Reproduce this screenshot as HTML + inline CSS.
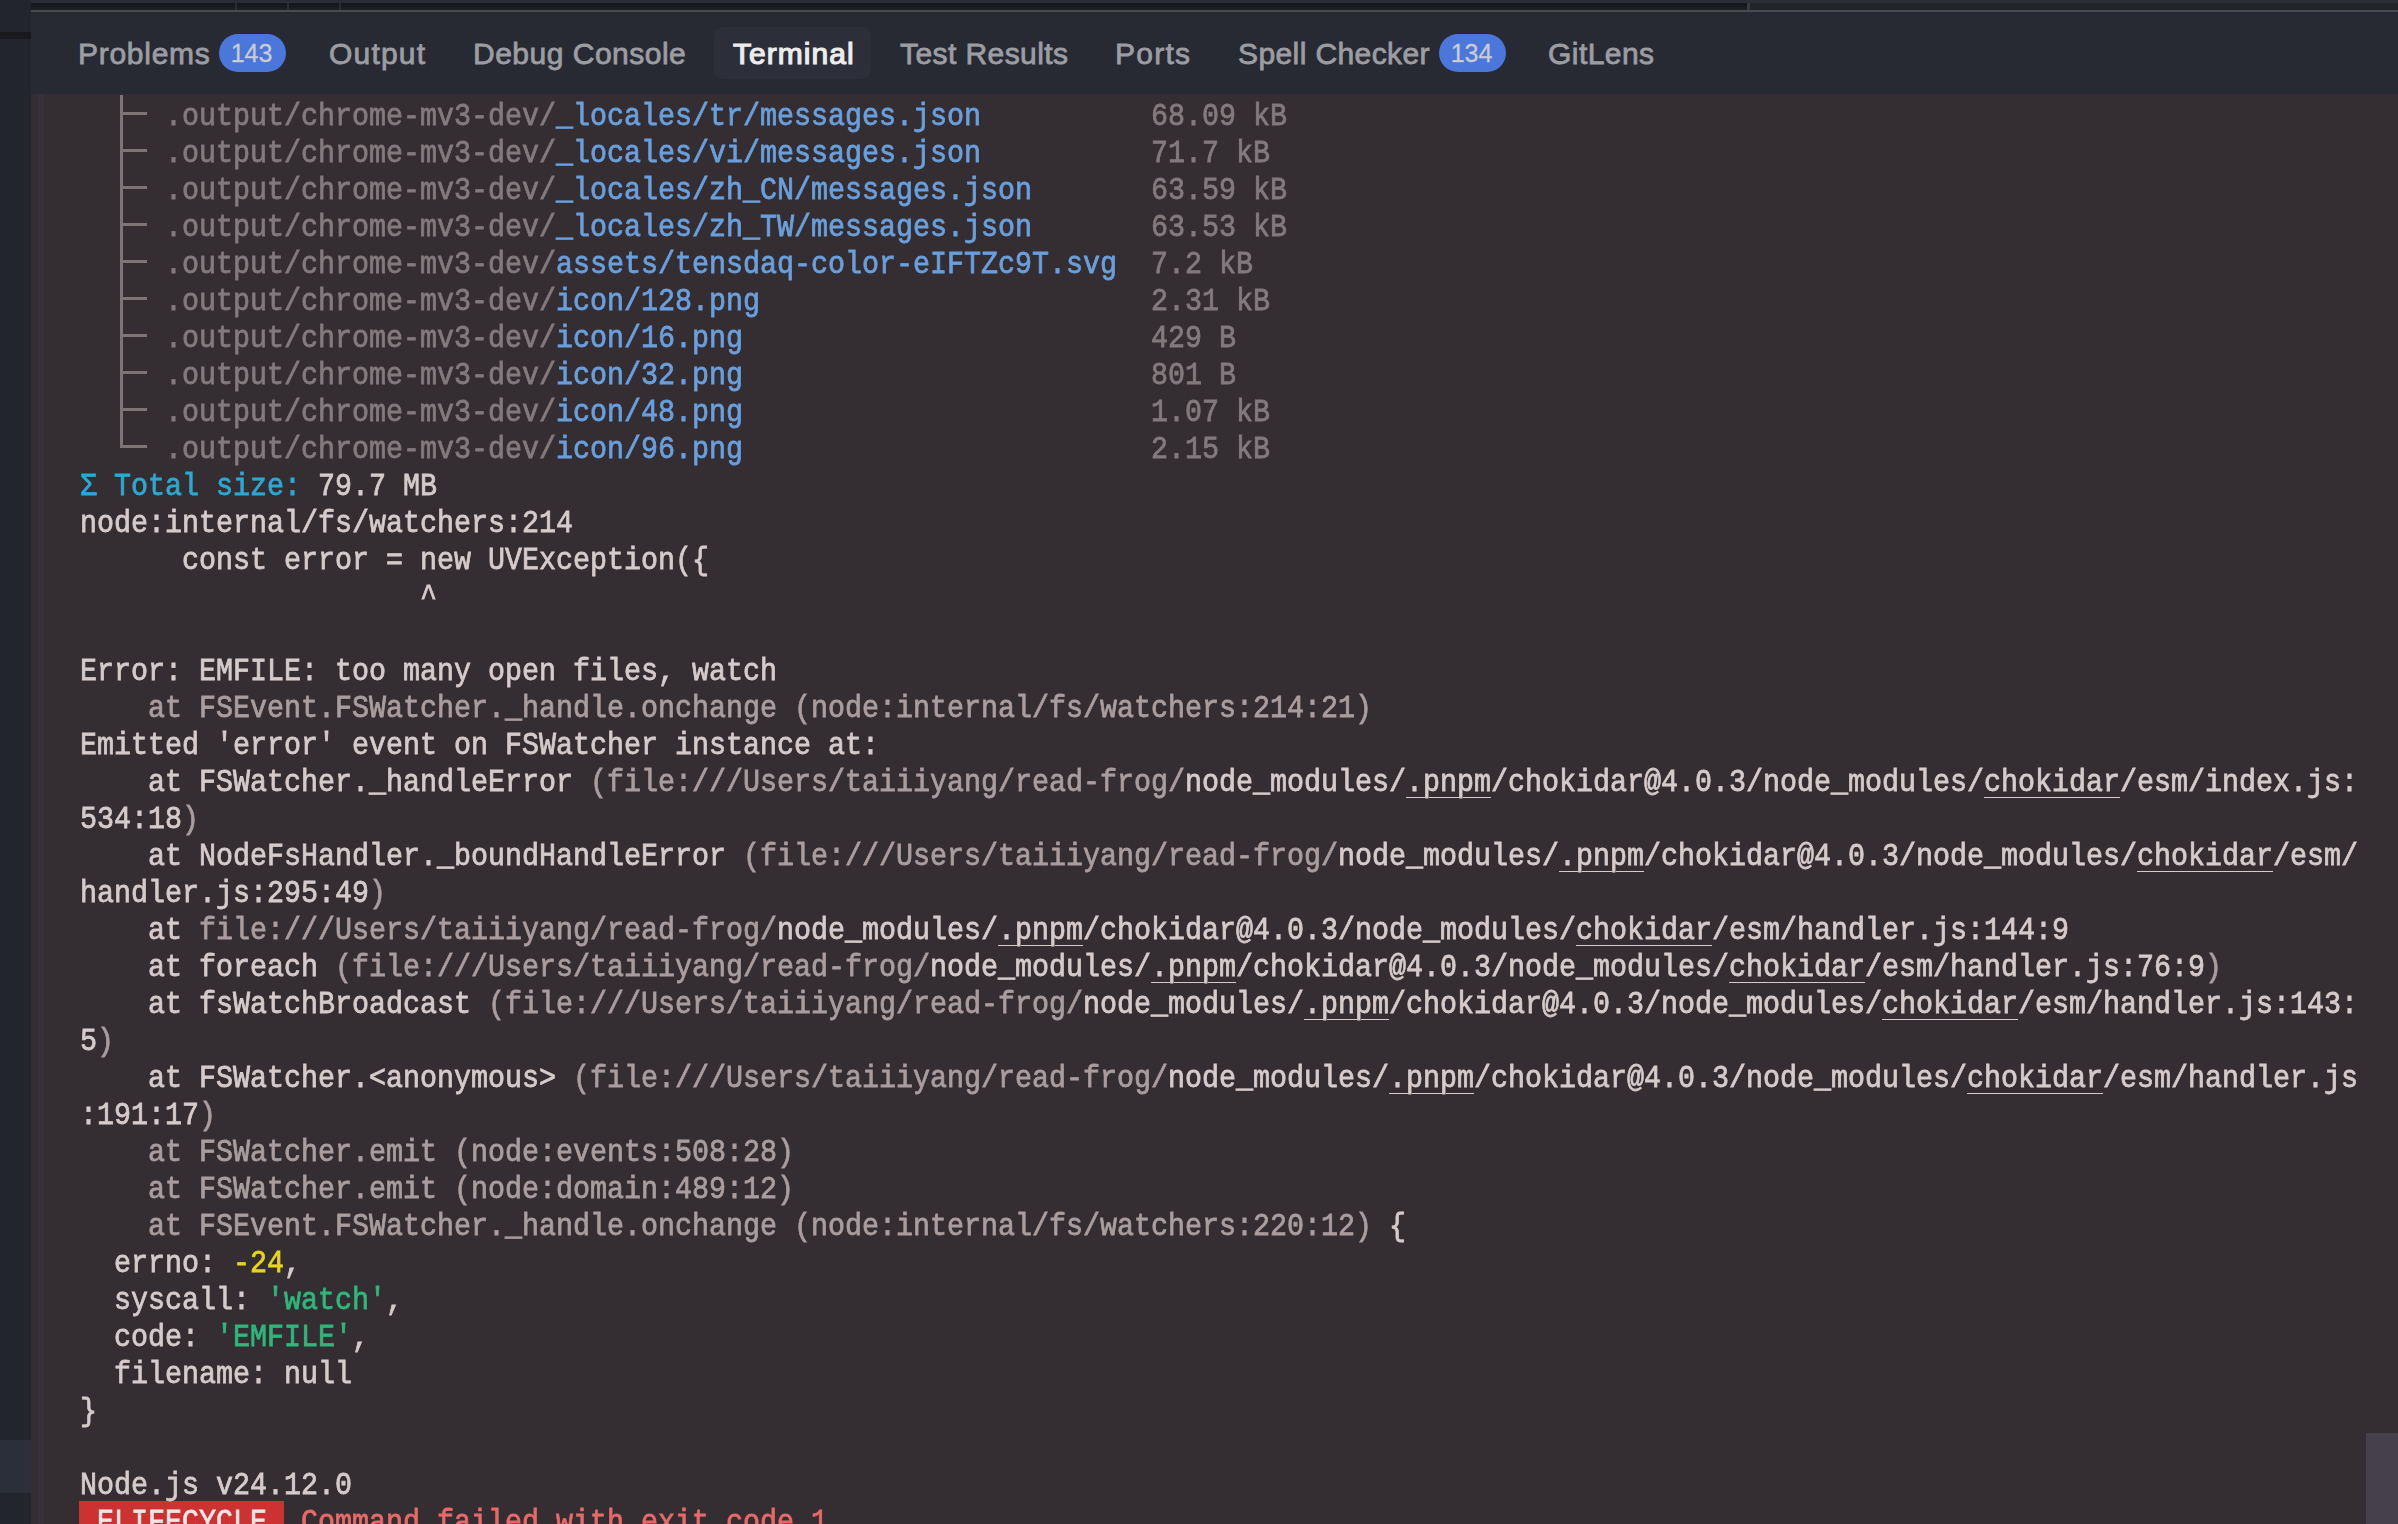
<!DOCTYPE html>
<html><head><meta charset="utf-8"><title>Terminal</title>
<style>
html,body{margin:0;padding:0;}
body{width:2398px;height:1524px;overflow:hidden;position:relative;background:#272a33;font-family:"Liberation Sans",sans-serif;}
.a{position:absolute;}
#left{left:0;top:0;width:31px;height:1524px;background:#22252e;}
#leftband{left:0;top:32px;width:31px;height:7px;background:#18191d;}
#leftblock{left:0;top:1440px;width:31px;height:53px;background:#2b2f39;}
#topstrip{left:31px;top:0;width:2367px;height:3px;background:#2a2d36;}
#topdark{left:31px;top:3px;width:1716px;height:7px;background:linear-gradient(#141518,#1f2024);}
#topdark2{left:1750px;top:3px;width:648px;height:7px;background:#22242b;}
#topline{left:31px;top:10px;width:2367px;height:2px;background:#4a4b51;}
.sep{top:3px;width:2px;height:7px;background:#2a2c33;}
.tab{top:37px;font-size:30px;line-height:34px;color:#9c9da2;white-space:nowrap;-webkit-text-stroke:0.8px;letter-spacing:0px;}
.badge{height:38px;top:34px;border-radius:19px;background:#4a77d9;color:#c9cbd2;font-size:25px;line-height:38px;text-align:center;-webkit-text-stroke:0.3px;text-indent:-2px;}
#activetab{left:714px;top:27px;width:157px;height:52px;border-radius:9px;background:#2c2f39;}
#term{left:31px;top:94px;width:2367px;height:1430px;background:#342d32;overflow:hidden;}
#termstrip{left:38px;top:94px;width:6px;height:1430px;background:#39313a;}
#thumb{left:2366px;top:1433px;width:32px;height:91px;background:#46404d;}
#rows{position:absolute;left:80px;top:98px;width:2400px;height:1500px;transform:scaleX(0.885287);transform-origin:0 0;font-family:"Liberation Mono",monospace;font-size:32px;line-height:37px;-webkit-text-stroke:0.8px;}
.row{position:absolute;left:0;white-space:pre;height:37px;}
.w{color:#d6cbcb}.d{color:#a99d9e}.g{color:#827a7c}.b{color:#6a9fdc}.c{color:#2ca8d3}
.y{color:#e5d421}.gr{color:#2fb67c}.r{color:#e66a6a}.rb{color:#f0e6e6}
.u{text-decoration:underline;text-decoration-thickness:1px;text-underline-offset:6px;}
.tl{background:#7d7476;}
#redbox{left:79px;top:1501px;width:205px;height:23px;background:#cd3232;}
</style></head><body>
<div class="a" id="left"></div>
<div class="a" id="leftband"></div>
<div class="a" id="leftblock"></div>
<div class="a" id="topstrip"></div>
<div class="a" id="topdark"></div>
<div class="a" id="topdark2"></div>
<div class="a sep" style="left:235px"></div>
<div class="a sep" style="left:287px"></div>
<div class="a sep" style="left:339px"></div>
<div class="a sep" style="left:1747px;width:3px;background:#383b45"></div>
<div class="a" id="topline"></div>

<div class="a" id="activetab"></div>
<div class="a tab" style="left:78px;letter-spacing:0.73px">Problems</div>
<div class="a badge" style="left:219px;width:67px">143</div>
<div class="a tab" style="left:329px;letter-spacing:1.2px">Output</div>
<div class="a tab" style="left:473px;letter-spacing:0.5px">Debug Console</div>
<div class="a tab" style="left:733px;color:#ececec;-webkit-text-stroke:1.2px;letter-spacing:1.05px">Terminal</div>
<div class="a tab" style="left:900px;letter-spacing:0.42px">Test Results</div>
<div class="a tab" style="left:1115px;letter-spacing:1.25px">Ports</div>
<div class="a tab" style="left:1238px;letter-spacing:0.4px">Spell Checker</div>
<div class="a badge" style="left:1439px;width:67px">134</div>
<div class="a tab" style="left:1548px;letter-spacing:0.45px">GitLens</div>

<div class="a" id="term"></div>
<div class="a" id="termstrip"></div>
<div class="a" id="thumb"></div>
<div class="a" id="redbox"></div>

<div class="a tl" style="left:120px;top:95px;width:3px;height:353px"></div>
<div class="a tl" style="left:120px;top:112px;width:27px;height:3px"></div>
<div class="a tl" style="left:120px;top:149px;width:27px;height:3px"></div>
<div class="a tl" style="left:120px;top:186px;width:27px;height:3px"></div>
<div class="a tl" style="left:120px;top:223px;width:27px;height:3px"></div>
<div class="a tl" style="left:120px;top:260px;width:27px;height:3px"></div>
<div class="a tl" style="left:120px;top:297px;width:27px;height:3px"></div>
<div class="a tl" style="left:120px;top:334px;width:27px;height:3px"></div>
<div class="a tl" style="left:120px;top:371px;width:27px;height:3px"></div>
<div class="a tl" style="left:120px;top:408px;width:27px;height:3px"></div>
<div class="a tl" style="left:120px;top:445px;width:27px;height:3px"></div>

<div id="rows">
<div class="row" style="top:0px"><span class="g">     </span><span class="g">.output/chrome-mv3-dev/</span><span class="b">_locales/tr/messages.json</span><span class="g">          68.09 kB</span></div>
<div class="row" style="top:37px"><span class="g">     </span><span class="g">.output/chrome-mv3-dev/</span><span class="b">_locales/vi/messages.json</span><span class="g">          71.7 kB</span></div>
<div class="row" style="top:74px"><span class="g">     </span><span class="g">.output/chrome-mv3-dev/</span><span class="b">_locales/zh_CN/messages.json</span><span class="g">       63.59 kB</span></div>
<div class="row" style="top:111px"><span class="g">     </span><span class="g">.output/chrome-mv3-dev/</span><span class="b">_locales/zh_TW/messages.json</span><span class="g">       63.53 kB</span></div>
<div class="row" style="top:148px"><span class="g">     </span><span class="g">.output/chrome-mv3-dev/</span><span class="b">assets/tensdaq-color-eIFTZc9T.svg</span><span class="g">  7.2 kB</span></div>
<div class="row" style="top:185px"><span class="g">     </span><span class="g">.output/chrome-mv3-dev/</span><span class="b">icon/128.png</span><span class="g">                       2.31 kB</span></div>
<div class="row" style="top:222px"><span class="g">     </span><span class="g">.output/chrome-mv3-dev/</span><span class="b">icon/16.png</span><span class="g">                        429 B</span></div>
<div class="row" style="top:259px"><span class="g">     </span><span class="g">.output/chrome-mv3-dev/</span><span class="b">icon/32.png</span><span class="g">                        801 B</span></div>
<div class="row" style="top:296px"><span class="g">     </span><span class="g">.output/chrome-mv3-dev/</span><span class="b">icon/48.png</span><span class="g">                        1.07 kB</span></div>
<div class="row" style="top:333px"><span class="g">     </span><span class="g">.output/chrome-mv3-dev/</span><span class="b">icon/96.png</span><span class="g">                        2.15 kB</span></div>
<div class="row" style="top:370px"><span class="c">Σ Total size:</span><span class="w"> 79.7 MB</span></div>
<div class="row" style="top:407px"><span class="w">node:internal/fs/watchers:214</span></div>
<div class="row" style="top:444px"><span class="w">      const error = new UVException({</span></div>
<div class="row" style="top:481px"><span class="w">                    ^</span></div>
<div class="row" style="top:518px"></div>
<div class="row" style="top:555px"><span class="w">Error: EMFILE: too many open files, watch</span></div>
<div class="row" style="top:592px"><span class="d">    at FSEvent.FSWatcher._handle.onchange (node:internal/fs/watchers:214:21)</span></div>
<div class="row" style="top:629px"><span class="w">Emitted &#x27;error&#x27; event on FSWatcher instance at:</span></div>
<div class="row" style="top:666px"><span class="w">    at FSWatcher._handleError </span><span class="d">(file:///Users/taiiiyang/read-frog/</span><span class="w">node_modules/</span><span class="w u">.pnpm</span><span class="w">/chokidar@4.0.3/node_modules/</span><span class="w u">chokidar</span><span class="w">/esm/index.js:</span></div>
<div class="row" style="top:703px"><span class="w">534:18</span><span class="d">)</span></div>
<div class="row" style="top:740px"><span class="w">    at NodeFsHandler._boundHandleError </span><span class="d">(file:///Users/taiiiyang/read-frog/</span><span class="w">node_modules/</span><span class="w u">.pnpm</span><span class="w">/chokidar@4.0.3/node_modules/</span><span class="w u">chokidar</span><span class="w">/esm/</span></div>
<div class="row" style="top:777px"><span class="w">handler.js:295:49</span><span class="d">)</span></div>
<div class="row" style="top:814px"><span class="w">    at </span><span class="d">file:///Users/taiiiyang/read-frog/</span><span class="w">node_modules/</span><span class="w u">.pnpm</span><span class="w">/chokidar@4.0.3/node_modules/</span><span class="w u">chokidar</span><span class="w">/esm/handler.js:144:9</span></div>
<div class="row" style="top:851px"><span class="w">    at foreach </span><span class="d">(file:///Users/taiiiyang/read-frog/</span><span class="w">node_modules/</span><span class="w u">.pnpm</span><span class="w">/chokidar@4.0.3/node_modules/</span><span class="w u">chokidar</span><span class="w">/esm/handler.js:76:9</span><span class="d">)</span></div>
<div class="row" style="top:888px"><span class="w">    at fsWatchBroadcast </span><span class="d">(file:///Users/taiiiyang/read-frog/</span><span class="w">node_modules/</span><span class="w u">.pnpm</span><span class="w">/chokidar@4.0.3/node_modules/</span><span class="w u">chokidar</span><span class="w">/esm/handler.js:143:</span></div>
<div class="row" style="top:925px"><span class="w">5</span><span class="d">)</span></div>
<div class="row" style="top:962px"><span class="w">    at FSWatcher.&lt;anonymous&gt; </span><span class="d">(file:///Users/taiiiyang/read-frog/</span><span class="w">node_modules/</span><span class="w u">.pnpm</span><span class="w">/chokidar@4.0.3/node_modules/</span><span class="w u">chokidar</span><span class="w">/esm/handler.js</span></div>
<div class="row" style="top:999px"><span class="w">:191:17</span><span class="d">)</span></div>
<div class="row" style="top:1036px"><span class="d">    at FSWatcher.emit (node:events:508:28)</span></div>
<div class="row" style="top:1073px"><span class="d">    at FSWatcher.emit (node:domain:489:12)</span></div>
<div class="row" style="top:1110px"><span class="d">    at FSEvent.FSWatcher._handle.onchange (node:internal/fs/watchers:220:12)</span><span class="w"> {</span></div>
<div class="row" style="top:1147px"><span class="w">  errno: </span><span class="y">-24</span><span class="w">,</span></div>
<div class="row" style="top:1184px"><span class="w">  syscall: </span><span class="gr">&#x27;watch&#x27;</span><span class="w">,</span></div>
<div class="row" style="top:1221px"><span class="w">  code: </span><span class="gr">&#x27;EMFILE&#x27;</span><span class="w">,</span></div>
<div class="row" style="top:1258px"><span class="w">  filename: null</span></div>
<div class="row" style="top:1295px"><span class="w">}</span></div>
<div class="row" style="top:1332px"></div>
<div class="row" style="top:1369px"><span class="w">Node.js v24.12.0</span></div>
<div class="row" style="top:1406px"><span class="rb"> ELIFECYCLE </span><span class="w"> </span><span class="r">Command failed with exit code 1.</span></div>
</div>
</body></html>
